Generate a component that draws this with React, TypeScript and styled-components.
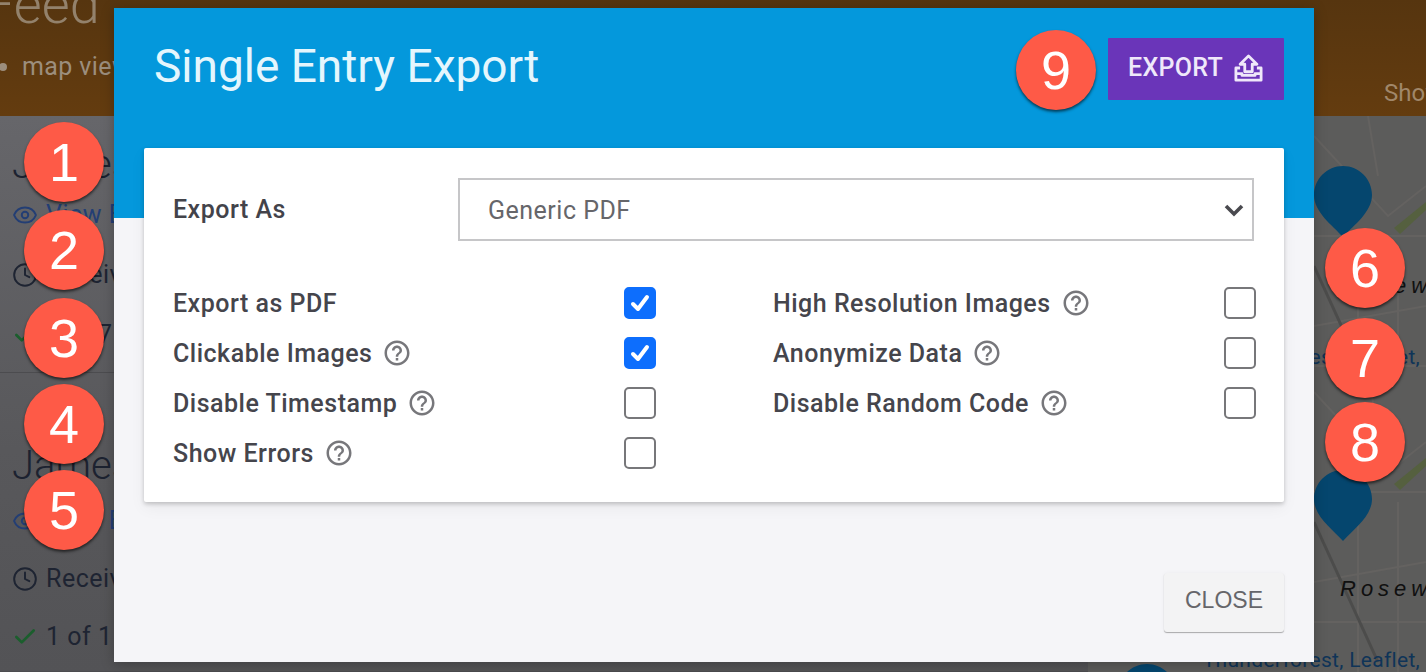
import React from 'react';
import styled, { createGlobalStyle } from 'styled-components';
import { Check, Clock, Eye } from 'lucide-react';
import { MdHelpOutline } from 'react-icons/md';

const GlobalStyle = createGlobalStyle`
  html, body {
    margin: 0;
    padding: 0;
    background: #4f4f52;
    font-family: Roboto, "Liberation Sans", sans-serif;
  }
`;

const Page = styled.div`
  position: relative;
  width: 1426px;
  height: 672px;
  overflow: hidden;
  display: flex;
  flex-direction: column;
`;

const TopBar = styled.header`
  height: 116px;
  flex-shrink: 0;
  overflow: hidden;
  background: linear-gradient(180deg, #56350f 0%, #643c0f 100%);
  display: flex;
  justify-content: space-between;
  align-items: flex-end;
`;

const TopBarLeft = styled.div`
  margin-bottom: 35px;
`;

const FeedTitle = styled.h1`
  margin: 0 0 21px -16px;
  font-size: 54px;
  font-weight: 300;
  line-height: 54px;
  color: #93826c;
`;

const ViewSwitch = styled.div`
  display: flex;
  align-items: center;
  gap: 15px;
  margin-left: -1px;
  font-size: 25px;
  font-weight: 400;
  line-height: 28px;
  letter-spacing: 0.4px;
  color: #9c8e7d;

  &::before {
    content: '';
    width: 8px;
    height: 8px;
    border-radius: 50%;
    background: #9c8e7d;
  }
`;

const TopBarAction = styled.span`
  font-size: 24px;
  line-height: 28px;
  color: #a0876a;
  margin-bottom: 9px;
  margin-right: -20px;
  width: 62px;
`;

const Content = styled.main`
  flex: 1;
  display: flex;
  min-height: 0;
`;

const FeedColumn = styled.section`
  flex: 1;
  background: linear-gradient(180deg, #66666a 0%, #58585b 60%, #535356 100%);
`;

const FeedCard = styled.article<{ $top: number; $height: number; $gap: number }>`
  height: ${p => p.$height}px;
  box-sizing: border-box;
  padding: ${p => p.$top}px 0 0 12px;
  display: flex;
  flex-direction: column;
  gap: ${p => p.$gap}px;
  border-bottom: 1px solid #4c4c4f;
`;

const EntryName = styled.h2<{ $pull: number }>`
  margin: 0 0 ${p => -p.$pull}px;
  font-size: 40px;
  font-weight: 300;
  line-height: 46px;
  color: #1c2230;
  white-space: nowrap;
`;

const EntryRow = styled.div<{ $color: string }>`
  display: flex;
  align-items: center;
  gap: 8px;
  font-size: 25px;
  line-height: 28px;
  letter-spacing: 0.5px;
  color: ${p => p.$color};
  white-space: nowrap;
`;

const MapColumn = styled.aside`
  width: 338px;
  flex-shrink: 0;
  display: flex;
  flex-direction: column;
  background: #5c5c5b;
`;

const MapTile = styled.div<{ $height: number }>`
  position: relative;
  height: ${p => p.$height}px;
  overflow: hidden;

  svg {
    display: block;
  }
`;

const Attribution = styled.span<{ $bottom: number }>`
  position: absolute;
  right: 6px;
  bottom: ${p => p.$bottom}px;
  font-size: 21px;
  line-height: 24px;
  letter-spacing: 0.3px;
  color: #0f3458;
  white-space: nowrap;
`;

const Overlay = styled.div`
  position: absolute;
  inset: 0;
  display: flex;
  justify-content: center;
  align-items: flex-start;
  padding: 8px 0 0 2px;
`;

const Modal = styled.div`
  position: relative;
  width: 1200px;
  height: 654px;
  background: #f5f5f8;
  box-shadow: 0 2px 12px rgba(0, 0, 0, 0.25);
  display: flex;
  flex-direction: column;
`;

const ModalHeader = styled.div`
  height: 210px;
  flex-shrink: 0;
  box-sizing: border-box;
  background: #0498dc;
  padding: 30px 30px 0 40px;
  display: flex;
  justify-content: space-between;
  align-items: flex-start;
`;

const ModalTitle = styled.h3`
  margin: 0;
  font-size: 46px;
  font-weight: 400;
  line-height: 56px;
  color: #e4f6fd;
`;

const ExportButton = styled.button`
  width: 176px;
  height: 62px;
  padding: 0 0 3px;
  border: none;
  border-radius: 1px;
  background: #6a35b9;
  color: #efe8fa;
  display: flex;
  justify-content: center;
  align-items: center;
  gap: 10px;
  font: 500 25px Roboto, sans-serif;
  letter-spacing: 0.3px;
`;

const ModalBody = styled.div`
  flex: 1;
  position: relative;
  padding: 0 30px 30px;
  display: flex;
  flex-direction: column;
  justify-content: space-between;
  align-items: flex-end;
`;

const OptionsCard = styled.div`
  width: 100%;
  height: 354px;
  margin-top: -70px;
  box-sizing: border-box;
  padding: 30px 28px 0 29px;
  background: #fff;
  border-radius: 2px;
  box-shadow: 0 2px 4px rgba(0, 0, 0, 0.2), 0 6px 16px rgba(0, 0, 0, 0.05);
`;

const SelectRow = styled.div`
  display: flex;
  align-items: center;
  margin-bottom: 37px;
`;

const FieldLabel = styled.label`
  width: 285px;
  flex-shrink: 0;
  font-size: 25px;
  font-weight: 500;
  line-height: 60px;
  letter-spacing: 0.5px;
  color: #43434a;
`;

const FakeSelect = styled.div`
  width: 796px;
  height: 63px;
  box-sizing: border-box;
  padding: 0 8px 0 28px;
  border: 2px solid #c6c6c8;
  display: flex;
  justify-content: space-between;
  align-items: center;
  font-size: 25px;
  letter-spacing: 0.5px;
  color: #66666a;
`;

const SelectValue = styled.span`
  padding-top: 2px;
`;

const OptionsGrid = styled.div`
  display: grid;
  grid-template-columns: 483px 483px;
  column-gap: 117px;
`;

const OptionColumn = styled.div`
  display: flex;
  flex-direction: column;
`;

const OptionRow = styled.div`
  height: 50px;
  display: flex;
  align-items: center;
`;

const OptionLabel = styled.span`
  font-size: 25px;
  font-weight: 500;
  letter-spacing: 0.5px;
  color: #45454c;
  white-space: nowrap;
`;

const HelpMark = styled(MdHelpOutline)`
  margin-left: 10px;
  font-size: 30px;
  color: #77777b;
`;

const CheckBox = styled.span<{ $checked?: boolean }>`
  margin-left: auto;
  width: 32px;
  height: 32px;
  box-sizing: border-box;
  border-radius: 5px;
  border: 2px solid ${p => (p.$checked ? '#0d6efd' : '#77777a')};
  background: ${p => (p.$checked ? '#0d6efd' : '#fff')};
  display: flex;
  justify-content: center;
  align-items: center;
`;

const CloseButton = styled.button`
  width: 120px;
  height: 59px;
  padding: 0 0 5px;
  border: none;
  border-radius: 3px;
  background: #f3f3f4;
  box-shadow: 0 1px 1px rgba(0, 0, 0, 0.3), 0 0 4px rgba(0, 0, 0, 0.04);
  color: #66666a;
  font: 400 23px "Liberation Sans", Arial, sans-serif;
`;

const Badge = styled.span<{ $x: number; $y: number }>`
  position: absolute;
  left: ${p => p.$x - 40}px;
  top: ${p => p.$y - 40}px;
  width: 80px;
  height: 80px;
  border-radius: 50%;
  background: #fe5a47;
  box-shadow: 0 2px 3px rgba(0, 0, 0, 0.6);
  color: #fff;
  font: 400 54px/80px "Liberation Sans", Arial, sans-serif;
  text-align: center;
`;

const pinPath = (x: number, y: number) =>
  `M${x} ${y} c-16 0 -29 13 -29 29 c0 17 18 30 29 42 c11 -12 29 -25 29 -42 c0 -16 -13 -29 -29 -29 Z`;

const MapDrawing = ({ height, label, pins }: { height: number; label: number; pins: number[][] }) => (
  <svg width={338} height={height} viewBox={`0 0 338 ${height}`}>
    <rect width="338" height={height} fill="#5c5c5b" />
    <path
      d="M226 20 L300 100 L338 70 M226 120 L338 120 M280 0 L290 60 M226 210 L338 190 M270 130 L270 300 M310 130 L310 300 M226 250 L338 250"
      stroke="#646260"
      strokeWidth="2"
      fill="none"
    />
    <path d="M226 150 L290 290" stroke="#4c4c4b" strokeWidth="3" fill="none" />
    <path d="M306 112 L338 86 L338 94 L312 118 Z" fill="#55603f" />
    <text
      x="252"
      y={label}
      fontFamily="Liberation Sans, sans-serif"
      fontStyle="italic"
      fontSize="22"
      letterSpacing="5"
      fill="#101010"
    >
      Rosewood
    </text>
    {pins.map(([x, y]) => (
      <path key={x} d={pinPath(x, y)} fill="#05466e" />
    ))}
  </svg>
);

const UploadTray = () => (
  <svg width="31" height="28" viewBox="0 0 32 30" fill="none" stroke="#efe8fa" strokeWidth="3" strokeLinejoin="round">
    <path d="M16 2 L25 11 H20 V19 H12 V11 H7 Z" />
    <path d="M7 15 H2.5 V28 H29.5 V15 H25" />
    <path d="M2.5 21 H9 V23 H23 V21 H29.5" />
  </svg>
);

const CheckMark = () => (
  <svg width="22" height="22" viewBox="0 0 22 22" fill="none" stroke="#fff" strokeWidth="4" strokeLinecap="round" strokeLinejoin="round">
    <path d="M4 12 L9 17 L18 5" />
  </svg>
);

const leftOptions = [
  { label: 'Export as PDF', help: false, checked: true },
  { label: 'Clickable Images', help: true, checked: true },
  { label: 'Disable Timestamp', help: true, checked: false },
  { label: 'Show Errors', help: true, checked: false },
];

const rightOptions = [
  { label: 'High Resolution Images', help: true, checked: false },
  { label: 'Anonymize Data', help: true, checked: false },
  { label: 'Disable Random Code', help: true, checked: false },
];

const badges = [
  { n: 1, x: 64, y: 162 },
  { n: 2, x: 64, y: 250 },
  { n: 3, x: 64, y: 338 },
  { n: 4, x: 64, y: 424 },
  { n: 5, x: 64, y: 510 },
  { n: 6, x: 1365, y: 268 },
  { n: 7, x: 1365, y: 358 },
  { n: 8, x: 1365, y: 442 },
  { n: 9, x: 1056, y: 70 },
];

const Option = ({ label, help, checked }: { label: string; help: boolean; checked: boolean }) => (
  <OptionRow>
    <OptionLabel>{label}</OptionLabel>
    {help && <HelpMark />}
    <CheckBox $checked={checked}>{checked && <CheckMark />}</CheckBox>
  </OptionRow>
);

type EntryProps = { top: number; height: number; gap: number; pull: number; count: string };

const Entry = ({ top, height, gap, pull, count }: EntryProps) => (
  <FeedCard $top={top} $height={height} $gap={gap}>
    <EntryName $pull={pull}>James Wilson</EntryName>
    <EntryRow $color="#233e74">
      <Eye size={26} strokeWidth={1.8} />
      View Entry
    </EntryRow>
    <EntryRow $color="#1e2432">
      <Clock size={26} strokeWidth={1.8} />
      Received today
    </EntryRow>
    <EntryRow $color="#1e2432">
      <Check size={26} strokeWidth={2.5} color="#1b5e2d" />
      {count}
    </EntryRow>
  </FeedCard>
);

export default function App() {
  return (
    <>
      <GlobalStyle />
      <Page>
        <TopBar>
          <TopBarLeft>
            <FeedTitle>Feed</FeedTitle>
            <ViewSwitch>map view</ViewSwitch>
          </TopBarLeft>
          <TopBarAction>Show</TopBarAction>
        </TopBar>
        <Content>
          <FeedColumn>
            <Entry top={26} height={257} gap={32} pull={19} count="1 of 7" />
            <Entry top={70} height={299} gap={30} pull={12} count="1 of 1" />
          </FeedColumn>
          <MapColumn>
            <MapTile $height={256}>
              <MapDrawing height={256} label={177} pins={[[255, 50]]} />
              <Attribution $bottom={3}>Thunderforest, Leaflet,</Attribution>
            </MapTile>
            <MapTile $height={300}>
              <MapDrawing height={300} label={224} pins={[[255, 98], [59, 292]]} />
              <Attribution $bottom={0}>Thunderforest, Leaflet,</Attribution>
            </MapTile>
          </MapColumn>
        </Content>

        <Overlay>
          <Modal>
            <ModalHeader>
              <ModalTitle>Single Entry Export</ModalTitle>
              <ExportButton>
                EXPORT
                <UploadTray />
              </ExportButton>
            </ModalHeader>
            <ModalBody>
              <OptionsCard>
                <SelectRow>
                  <FieldLabel>Export As</FieldLabel>
                  <FakeSelect>
                    <SelectValue>Generic PDF</SelectValue>
                    <svg width="20" height="14" viewBox="0 0 20 14" fill="none" stroke="#4a4a4f" strokeWidth="3.6">
                      <path d="M2 3 L10 11 L18 3" />
                    </svg>
                  </FakeSelect>
                </SelectRow>
                <OptionsGrid>
                  <OptionColumn>
                    {leftOptions.map(o => (
                      <Option key={o.label} {...o} />
                    ))}
                  </OptionColumn>
                  <OptionColumn>
                    {rightOptions.map(o => (
                      <Option key={o.label} {...o} />
                    ))}
                  </OptionColumn>
                </OptionsGrid>
              </OptionsCard>
              <CloseButton>CLOSE</CloseButton>
            </ModalBody>
          </Modal>
        </Overlay>

        {badges.map(b => (
          <Badge key={b.n} $x={b.x} $y={b.y}>
            {b.n}
          </Badge>
        ))}
      </Page>
    </>
  );
}
